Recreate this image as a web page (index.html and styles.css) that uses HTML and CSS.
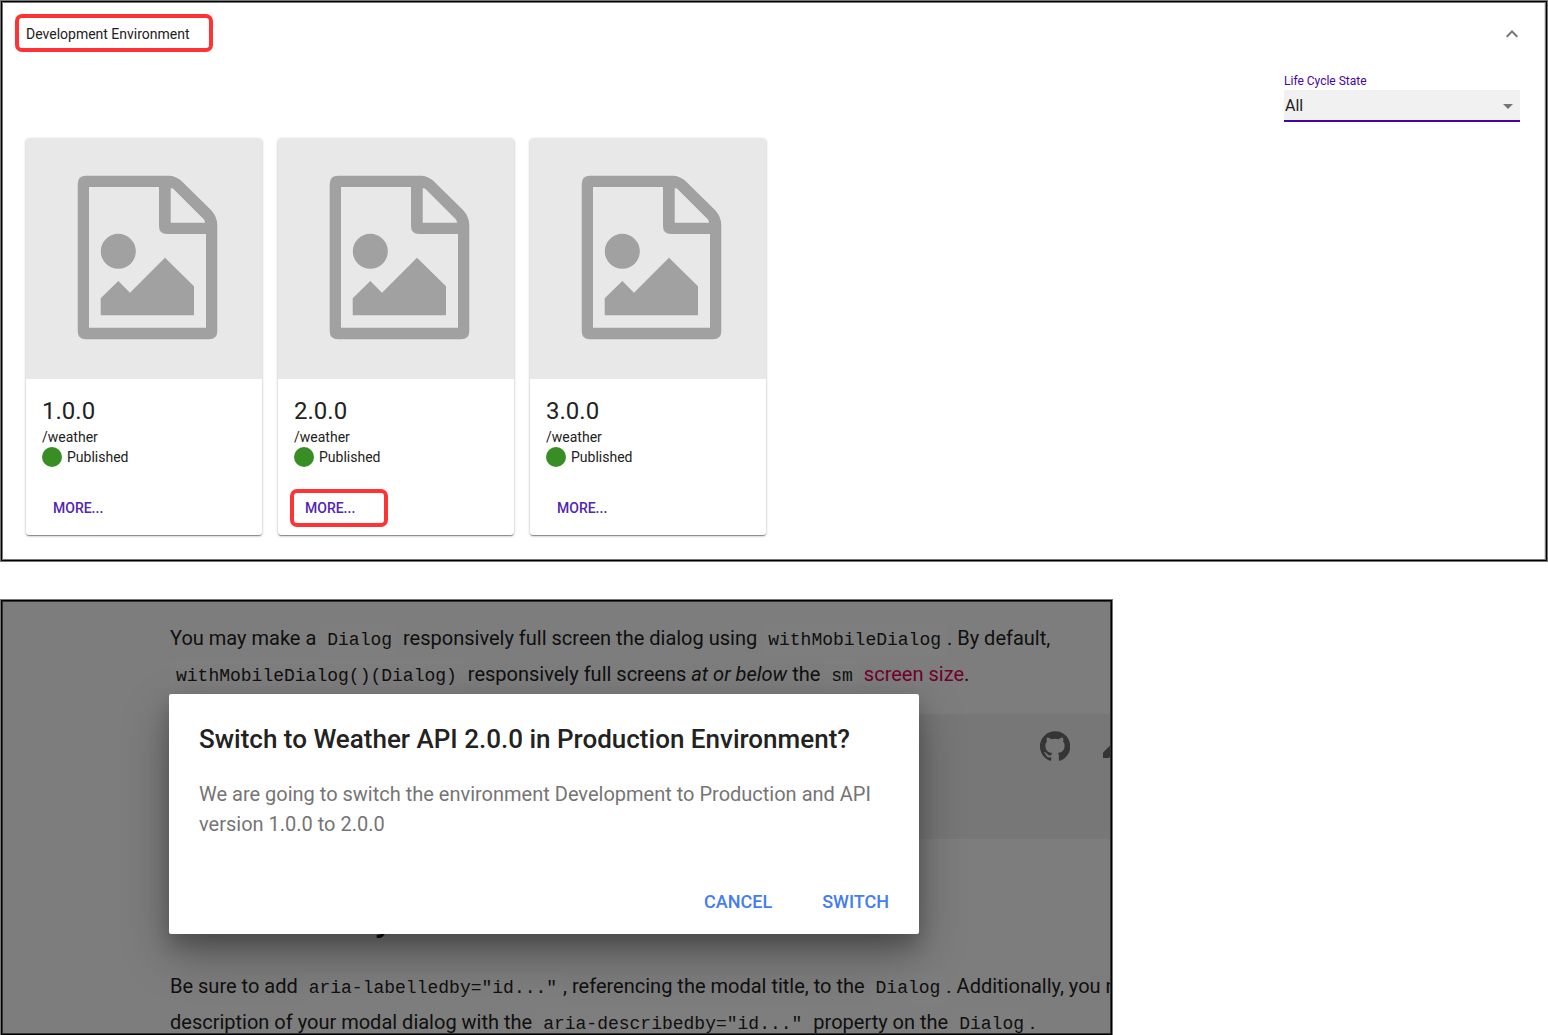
FILE: index.html
```html
<!DOCTYPE html>
<html lang="en">
<head>
<meta charset="utf-8">
<title>API environments</title>
<link rel="stylesheet" href="styles.css">
</head>
<body>
<svg class="defs" aria-hidden="true">
  <symbol id="placeholder" viewBox="0 0 236 241">
    <path fill-rule="evenodd" d="M60 37.7H143.3Q151 38 157.3 44.7L185 72Q191.300 79 191.300 87V193Q191.300 201.300 183 201.300H60Q51.700 201.300 51.700 193V46Q51.700 37.700 60 37.700ZM63 49V189.700H180V96H141Q133 96 133 88V49ZM144.700 50.300V84.700H179Q179 82.500 177.500 81L147.500 51Q146.500 50 144.700 50.300Z"/>
    <circle cx="92.300" cy="113.300" r="17.500"/>
    <path d="M74.700 160.300L92.300 143L104 154.700L139 119.700L168 148.300V177.300H74.700Z"/>
  </symbol>
</svg>

<section class="panel environment">
  <div class="environment-body">
    <header class="environment-header">
      <h1 class="environment-title highlight">Development Environment</h1>
      <button class="icon-button" type="button" aria-label="Collapse">
        <svg viewBox="0 0 24 24" width="24" height="24"><path d="M12 8l-6 6 1.410 1.410L12 10.830l4.590 4.580L18 14z"/></svg>
      </button>
    </header>

    <div class="filter">
      <label for="state">Life Cycle State</label>
      <div class="select">
        <select id="state"><option>All</option><option>Published</option></select>
        <svg class="select-arrow" viewBox="0 0 24 24" width="24" height="24"><path d="M7 10l5 5 5-5z"/></svg>
      </div>
    </div>

    <div class="cards">
      <article class="card">
        <svg class="card-media" viewBox="0 0 236 241" role="img" aria-label="No image"><use href="#placeholder"/></svg>
        <div class="card-content">
          <h2>1.0.0</h2>
          <p>/weather</p>
          <p class="status"><span class="dot"></span>Published</p>
        </div>
        <button class="more" type="button">MORE...</button>
      </article>
      <article class="card">
        <svg class="card-media" viewBox="0 0 236 241" role="img" aria-label="No image"><use href="#placeholder"/></svg>
        <div class="card-content">
          <h2>2.0.0</h2>
          <p>/weather</p>
          <p class="status"><span class="dot"></span>Published</p>
        </div>
        <button class="more highlight" type="button">MORE...</button>
      </article>
      <article class="card">
        <svg class="card-media" viewBox="0 0 236 241" role="img" aria-label="No image"><use href="#placeholder"/></svg>
        <div class="card-content">
          <h2>3.0.0</h2>
          <p>/weather</p>
          <p class="status"><span class="dot"></span>Published</p>
        </div>
        <button class="more" type="button">MORE...</button>
      </article>
    </div>
  </div>
</section>

<section class="panel docs">
  <div class="docs-page">
    <p>You may make a <code>Dialog</code> responsively full screen the dialog using <code>withMobileDialog</code>. By default,<br><code>withMobileDialog()(Dialog)</code> responsively full screens <em>at or below</em> the <code>sm</code> <a href="#size">screen size</a>.</p>
    <div class="demo">
      <svg viewBox="1 1 22 22" width="30" height="30"><path d="M12 1.270a11 11 0 00-3.480 21.460c.550.090.730-.280.730-.550v-1.840c-3.030.640-3.670-1.460-3.670-1.460-.550-1.290-1.280-1.650-1.280-1.650-.920-.650.100-.650.100-.650 1.100 0 1.730 1.100 1.730 1.100.920 1.650 2.570 1.200 3.210.920a2 2 0 01.640-1.470c-2.470-.270-5.040-1.190-5.040-5.500 0-1.100.460-2.100 1.200-2.840a3.760 3.760 0 010-2.930s.910-.280 3.110 1.100c1.800-.490 3.700-.490 5.500 0 2.100-1.380 3.020-1.100 3.020-1.100a3.760 3.760 0 01.100 2.930c.730.740 1.190 1.740 1.190 2.840 0 4.320-2.580 5.230-5.040 5.500.450.370.820.920.820 2.020v3.030c0 .270.100.640.730.550A11 11 0 0012 1.270"/></svg>
      <svg viewBox="3 3 18 18" width="27" height="27"><path d="M3 17.250V21h3.750L17.810 9.940l-3.750-3.750L3 17.250zM20.710 7.040a1 1 0 000-1.410l-2.340-2.340a1 1 0 00-1.410 0l-1.830 1.830 3.750 3.750 1.830-1.830z"/></svg>
    </div>
    <h2 class="docs-heading">Accessibility</h2>
    <p>Be sure to add <code>aria-labelledby="id..."</code>, referencing the modal title, to the <code>Dialog</code>. Additionally, you may<br>description of your modal dialog with the <code>aria-describedby="id..."</code> property on the <code>Dialog</code>.</p>
  </div>
  <div class="backdrop">
    <div class="dialog" role="dialog" aria-labelledby="dialog-title" aria-describedby="dialog-text">
      <h2 id="dialog-title">Switch to Weather API 2.0.0 in Production Environment?</h2>
      <p id="dialog-text">We are going to switch the environment Development to Production and API version 1.0.0 to 2.0.0</p>
      <div class="dialog-actions">
        <button type="button">CANCEL</button>
        <button type="button">SWITCH</button>
      </div>
    </div>
  </div>
</section>
</body>
</html>
```
FILE: styles.css
```css
* { box-sizing: border-box; }
body {
  margin: 0;
  background: #fff;
  color: #222;
  font: 14px/20px Roboto, sans-serif;
}
h1, h2, p { margin: 0; font-weight: 400; }
button, select { font-family: inherit; color: inherit; cursor: pointer; }
button { border: 0; background: none; }
.defs { display: none; }

.panel {
  padding: 2px;
  border: 1px solid #777;
  background: #777;
  box-shadow: inset 0 0 0 1px #000;
}

/* Environment panel */
.environment-body {
  padding: 11px 24px 24px 23px;
  border-right: 1px solid #ddd;
  background: #fff;
}
.environment-header { display: flex; align-items: center; justify-content: space-between; }
.highlight { border: 4px solid #f33; border-radius: 7px; }
.environment-title {
  width: 198px;
  margin-left: -11px;
  padding: 6px 7px 4px;
  font-size: 14px;
  line-height: 20px;
}
.icon-button { height: 24px; margin: 2px -4px 0 0; padding: 0; fill: #757575; }
.icon-button svg { display: block; }
.filter { width: 236px; margin: 21px 0 16px auto; }
.filter label { display: block; height: 17px; font-size: 12px; line-height: 16px; color: #4405a0; }
.select { position: relative; }
.select select {
  display: block;
  width: 100%;
  height: 32px;
  padding: 0 24px 0 1px;
  border: 0;
  border-bottom: 2px solid #4405a0;
  border-radius: 0;
  background: #f1f1f1;
  font-size: 16px;
  appearance: none;
}
.select-arrow { position: absolute; top: 4px; right: 0; fill: #757575; pointer-events: none; }

.cards { display: grid; grid-template-columns: repeat(auto-fill, 236px); gap: 16px; }
.card {
  overflow: hidden;
  padding-bottom: 8px;
  border-radius: 3px;
  box-shadow: 0 1px 3px rgba(0, 0, 0, .25), 0 1px 1px rgba(0, 0, 0, .2), 0 2px 1px -1px rgba(0, 0, 0, .2);
}
.card-media { display: block; width: 100%; background: #e8e8e8; fill: #a1a1a1; }
.card-content { padding: 16px 16px 22px; }
.card-content h2 { font-size: 24px; line-height: 32px; }
.status { display: flex; gap: 5px; }
.dot { width: 20px; height: 20px; border-radius: 50%; background: #388e24; }
.more {
  width: 98px;
  height: 38px;
  margin-left: 12px;
  padding: 0 11px;
  border: 4px solid transparent;
  color: #5226b0;
  font-size: 14px;
  font-weight: 500;
  text-align: left;
}
.more.highlight { border-color: #f33; }

/* Documentation page behind the dialog */
.docs { position: relative; max-width: 1113px; margin-top: 37px; background: #333; }
.docs-page {
  overflow: hidden;
  padding: 18px 0 0 167px;
  background: #fafafa;
  font-size: 20px;
  line-height: 36px;
  white-space: nowrap;
}
.docs code {
  padding: 6px;
  background: #fcfcfc;
  font-family: "Liberation Mono", monospace;
  font-size: 18px;
  line-height: 20px;
}
.docs a { color: #e1005a; text-decoration: none; }
.demo {
  display: flex;
  justify-content: flex-end;
  gap: 33px;
  height: 125px;
  margin: 22px -20px 0 0;
  padding-top: 17px;
  background: #eee;
  fill: #6a6a6a;
}
.docs-heading { margin: 58px 0 31px; font-size: 40px; line-height: 40px; }
.docs-page p:last-child { height: 65px; }

.backdrop {
  position: absolute;
  inset: 2px;
  overflow: hidden;
  padding: 92px 0 0 166px;
  background: rgba(0, 0, 0, .5);
}
.dialog {
  max-width: 750px;
  padding: 29px 30px 11px;
  border-radius: 2px;
  background: #fff;
  box-shadow: 0 11px 19px rgba(0, 0, 0, .2), 0 20px 48px rgba(0, 0, 0, .3);
}
.dialog h2 { font-size: 26px; line-height: 32px; font-weight: 500; }
.dialog p { margin: 24px 0 41px; font-size: 20px; line-height: 30px; color: #757575; }
.dialog-actions { display: flex; justify-content: flex-end; gap: 30px; margin-right: -10px; }
.dialog-actions button {
  height: 43px;
  padding: 0 10px;
  color: #437df0;
  font-size: 18px;
  font-weight: 500;
}
```
